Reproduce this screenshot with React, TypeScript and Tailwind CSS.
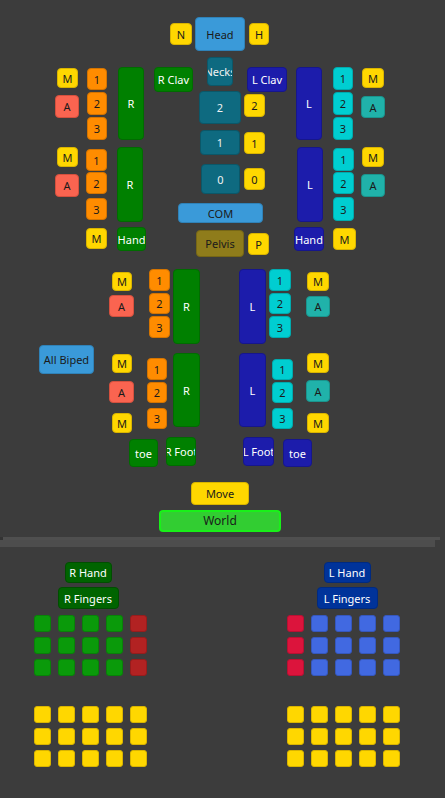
import React from 'react'

// colour sets for the picker buttons
const tone = {
  gold: 'bg-[#ffd700] border-[#d9b400] text-[#1a1a1a]',
  orange: 'bg-[#ff8c00] border-[#d47400] text-[#1a1a1a]',
  tomato: 'bg-[#fa6450] border-[#d4503e] text-[#1a1a1a]',
  green: 'bg-[#008000] border-[#006c00] text-white',
  blue: 'bg-[#1c1cab] border-[#16168c] text-white',
  cyan: 'bg-[#00ced1] border-[#00abae] text-[#1a1a1a]',
  teal: 'bg-[#20b2aa] border-[#1a948d] text-[#1a1a1a]',
  sky: 'bg-[#3a9ad9] border-[#2f82b8] text-[#1a1a1a]',
  spine: 'bg-[#0e6a80] border-[#0b5768] text-[#f2f2f2]',
  olive: 'bg-[#8f7c1b] border-[#766616] text-[#1a1a1a]',
}

type Tone = keyof typeof tone

type Node = { label: string; pos: string; tone: Tone }

// body picker nodes, placed on the canvas
const nodes: Node[] = [
  // head
  { label: 'N', pos: 'left-[170px] top-[23px] w-[22px] h-[22px]', tone: 'gold' },
  { label: 'Head', pos: 'left-[195px] top-[17px] w-[50px] h-[34px]', tone: 'sky' },
  { label: 'H', pos: 'left-[249px] top-[23px] w-[20px] h-[22px]', tone: 'gold' },

  // right upper arm
  { label: 'M', pos: 'left-[57px] top-[68px] w-[21px] h-[20px]', tone: 'gold' },
  { label: 'A', pos: 'left-[55px] top-[95px] w-[24px] h-[23px]', tone: 'tomato' },
  { label: '1', pos: 'left-[87px] top-[68px] w-[20px] h-[22px]', tone: 'orange' },
  { label: '2', pos: 'left-[87px] top-[92px] w-[20px] h-[23px]', tone: 'orange' },
  { label: '3', pos: 'left-[87px] top-[117px] w-[20px] h-[23px]', tone: 'orange' },
  { label: 'R', pos: 'left-[118px] top-[67px] w-[26px] h-[73px]', tone: 'green' },
  { label: 'R Clav', pos: 'left-[154px] top-[67px] w-[39px] h-[25px]', tone: 'green' },

  // neck / spine
  { label: 'Necks', pos: 'left-[207px] top-[57px] w-[26px] h-[29px]', tone: 'spine' },
  { label: '2', pos: 'left-[199px] top-[91px] w-[42px] h-[33px]', tone: 'spine' },
  { label: '2', pos: 'left-[244px] top-[94px] w-[21px] h-[23px]', tone: 'gold' },
  { label: '1', pos: 'left-[200px] top-[130px] w-[40px] h-[25px]', tone: 'spine' },
  { label: '1', pos: 'left-[244px] top-[132px] w-[21px] h-[22px]', tone: 'gold' },
  { label: '0', pos: 'left-[201px] top-[164px] w-[39px] h-[30px]', tone: 'spine' },
  { label: '0', pos: 'left-[244px] top-[168px] w-[21px] h-[22px]', tone: 'gold' },
  { label: 'COM', pos: 'left-[178px] top-[203px] w-[85px] h-[20px]', tone: 'sky' },
  { label: 'Pelvis', pos: 'left-[196px] top-[230px] w-[48px] h-[27px]', tone: 'olive' },
  { label: 'P', pos: 'left-[248px] top-[233px] w-[21px] h-[22px]', tone: 'gold' },

  // left upper arm
  { label: 'L Clav', pos: 'left-[247px] top-[67px] w-[40px] h-[25px]', tone: 'blue' },
  { label: 'L', pos: 'left-[296px] top-[67px] w-[26px] h-[73px]', tone: 'blue' },
  { label: '1', pos: 'left-[333px] top-[67px] w-[20px] h-[23px]', tone: 'cyan' },
  { label: '2', pos: 'left-[333px] top-[92px] w-[20px] h-[23px]', tone: 'cyan' },
  { label: '3', pos: 'left-[333px] top-[117px] w-[20px] h-[23px]', tone: 'cyan' },
  { label: 'M', pos: 'left-[362px] top-[68px] w-[22px] h-[20px]', tone: 'gold' },
  { label: 'A', pos: 'left-[361px] top-[96px] w-[24px] h-[22px]', tone: 'teal' },

  // right forearm + hand
  { label: 'M', pos: 'left-[57px] top-[147px] w-[21px] h-[20px]', tone: 'gold' },
  { label: 'A', pos: 'left-[55px] top-[174px] w-[24px] h-[23px]', tone: 'tomato' },
  { label: '1', pos: 'left-[86px] top-[149px] w-[21px] h-[22px]', tone: 'orange' },
  { label: '2', pos: 'left-[86px] top-[172px] w-[21px] h-[22px]', tone: 'orange' },
  { label: '3', pos: 'left-[86px] top-[198px] w-[21px] h-[22px]', tone: 'orange' },
  { label: 'R', pos: 'left-[117px] top-[147px] w-[26px] h-[75px]', tone: 'green' },
  { label: 'M', pos: 'left-[86px] top-[228px] w-[21px] h-[21px]', tone: 'gold' },
  { label: 'Hand', pos: 'left-[117px] top-[227px] w-[29px] h-[24px]', tone: 'green' },

  // left forearm + hand
  { label: 'L', pos: 'left-[297px] top-[147px] w-[26px] h-[75px]', tone: 'blue' },
  { label: '1', pos: 'left-[333px] top-[148px] w-[21px] h-[23px]', tone: 'cyan' },
  { label: '2', pos: 'left-[333px] top-[172px] w-[21px] h-[22px]', tone: 'cyan' },
  { label: '3', pos: 'left-[333px] top-[197px] w-[21px] h-[24px]', tone: 'cyan' },
  { label: 'M', pos: 'left-[362px] top-[147px] w-[22px] h-[20px]', tone: 'gold' },
  { label: 'A', pos: 'left-[361px] top-[174px] w-[24px] h-[23px]', tone: 'teal' },
  { label: 'Hand', pos: 'left-[294px] top-[227px] w-[30px] h-[24px]', tone: 'blue' },
  { label: 'M', pos: 'left-[333px] top-[228px] w-[23px] h-[22px]', tone: 'gold' },

  // thighs
  { label: 'M', pos: 'left-[112px] top-[272px] w-[20px] h-[19px]', tone: 'gold' },
  { label: 'A', pos: 'left-[109px] top-[295px] w-[25px] h-[22px]', tone: 'tomato' },
  { label: '1', pos: 'left-[149px] top-[269px] w-[21px] h-[22px]', tone: 'orange' },
  { label: '2', pos: 'left-[149px] top-[293px] w-[21px] h-[21px]', tone: 'orange' },
  { label: '3', pos: 'left-[149px] top-[316px] w-[21px] h-[22px]', tone: 'orange' },
  { label: 'R', pos: 'left-[173px] top-[269px] w-[27px] h-[75px]', tone: 'green' },
  { label: 'L', pos: 'left-[239px] top-[269px] w-[27px] h-[75px]', tone: 'blue' },
  { label: '1', pos: 'left-[269px] top-[269px] w-[22px] h-[22px]', tone: 'cyan' },
  { label: '2', pos: 'left-[269px] top-[293px] w-[22px] h-[21px]', tone: 'cyan' },
  { label: '3', pos: 'left-[269px] top-[316px] w-[22px] h-[22px]', tone: 'cyan' },
  { label: 'M', pos: 'left-[307px] top-[272px] w-[22px] h-[19px]', tone: 'gold' },
  { label: 'A', pos: 'left-[306px] top-[296px] w-[24px] h-[21px]', tone: 'teal' },

  { label: 'All Biped', pos: 'left-[39px] top-[345px] w-[55px] h-[29px]', tone: 'sky' },

  // calves
  { label: 'M', pos: 'left-[112px] top-[354px] w-[20px] h-[19px]', tone: 'gold' },
  { label: 'A', pos: 'left-[109px] top-[381px] w-[25px] h-[22px]', tone: 'tomato' },
  { label: 'M', pos: 'left-[112px] top-[413px] w-[20px] h-[20px]', tone: 'gold' },
  { label: '1', pos: 'left-[147px] top-[358px] w-[20px] h-[22px]', tone: 'orange' },
  { label: '2', pos: 'left-[147px] top-[382px] w-[20px] h-[21px]', tone: 'orange' },
  { label: '3', pos: 'left-[147px] top-[408px] w-[20px] h-[21px]', tone: 'orange' },
  { label: 'R', pos: 'left-[173px] top-[353px] w-[27px] h-[74px]', tone: 'green' },
  { label: 'L', pos: 'left-[239px] top-[353px] w-[27px] h-[74px]', tone: 'blue' },
  { label: '1', pos: 'left-[272px] top-[359px] w-[21px] h-[21px]', tone: 'cyan' },
  { label: '2', pos: 'left-[272px] top-[382px] w-[21px] h-[21px]', tone: 'cyan' },
  { label: '3', pos: 'left-[272px] top-[408px] w-[21px] h-[21px]', tone: 'cyan' },
  { label: 'M', pos: 'left-[307px] top-[353px] w-[22px] h-[20px]', tone: 'gold' },
  { label: 'A', pos: 'left-[306px] top-[380px] w-[24px] h-[22px]', tone: 'teal' },
  { label: 'M', pos: 'left-[307px] top-[413px] w-[22px] h-[20px]', tone: 'gold' },

  // feet
  { label: 'toe', pos: 'left-[129px] top-[439px] w-[29px] h-[28px]', tone: 'green' },
  { label: 'R Foot', pos: 'left-[166px] top-[437px] w-[30px] h-[29px]', tone: 'green' },
  { label: 'L Foot', pos: 'left-[243px] top-[437px] w-[31px] h-[29px]', tone: 'blue' },
  { label: 'toe', pos: 'left-[283px] top-[439px] w-[29px] h-[28px]', tone: 'blue' },

  { label: 'Move', pos: 'left-[191px] top-[482px] w-[58px] h-[23px]', tone: 'gold' },
]

function PickButton({ label, pos, tone: t }: Node) {
  return (
    <button
      className={`absolute ${pos} ${tone[t]} flex items-center justify-center overflow-hidden whitespace-nowrap rounded-[4px] border text-[11px] leading-none`}
    >
      {label}
    </button>
  )
}

function FingerGrid({ cells }: { cells: string[] }) {
  return (
    <div className="grid grid-cols-5 gap-x-[7px] gap-y-[5px]">
      {cells.map((c, i) => (
        <div key={i} className={`h-[17px] w-[17px] rounded-[3px] border ${c}`} />
      ))}
    </div>
  )
}

const G = 'bg-[#0a9a0a] border-[#088208]'
const RR = 'bg-[#b22222] border-[#961c1c]'
const CR = 'bg-[#dc143c] border-[#b81032]'
const B = 'bg-[#4169e1] border-[#3557bd]'
const Y = 'bg-[#ffd700] border-[#d9b400]'

const rightFingers = [G, G, G, G, RR, G, G, G, G, RR, G, G, G, G, RR]
const leftFingers = [CR, B, B, B, B, CR, B, B, B, B, CR, B, B, B, B]
const extras = Array(15).fill(Y)

export default function App() {
  return (
    <div
      className="min-h-[798px] w-[445px] bg-[#3c3c3c] text-[11px]"
      style={{ fontFamily: '"Noto Sans", "Open Sans", sans-serif' }}
    >
      {/* body canvas */}
      <div className="relative h-[537px]">
        {nodes.map((n, i) => (
          <PickButton key={i} {...n} />
        ))}
        <button className="absolute left-[159px] top-[510px] flex h-[22px] w-[122px] items-center justify-center rounded-[4px] border-2 border-[#19f019] bg-[#32cd32] text-[12px] leading-none text-[#1a1a1a]">
          World
        </button>
      </div>

      {/* splitter */}
      <div className="relative h-[10px]">
        <div className="h-[3px] w-[440px] bg-[#4f4f4f]" />
        <div className="h-[7px] w-[435px] bg-[#4d4d4d]" />
        <div className="absolute left-0 top-0 h-[3px] w-[3px] bg-[#333]" />
      </div>

      {/* hands */}
      <div className="flex pt-[15px]">
        <div className="ml-[34px] flex w-[113px] flex-col items-center">
          <div className="ml-[-5px] flex h-[21px] w-[47px] items-center justify-center rounded-[4px] border border-[#004e00] bg-[#006400] leading-none text-white">
            R Hand
          </div>
          <div className="ml-[-5px] mt-[4px] flex h-[22px] w-[61px] items-center justify-center rounded-[4px] border border-[#004e00] bg-[#006400] leading-none text-white">
            R Fingers
          </div>
          <div className="mt-[6px]">
            <FingerGrid cells={rightFingers} />
          </div>
          <div className="mt-[30px]">
            <FingerGrid cells={extras} />
          </div>
        </div>

        <div className="ml-[140px] flex w-[113px] flex-col items-center">
          <div className="ml-[7px] flex h-[21px] w-[47px] items-center justify-center rounded-[4px] border border-[#002a80] bg-[#00339a] leading-none text-white">
            L Hand
          </div>
          <div className="ml-[7px] mt-[4px] flex h-[22px] w-[61px] items-center justify-center rounded-[4px] border border-[#002a80] bg-[#00339a] leading-none text-white">
            L Fingers
          </div>
          <div className="mt-[6px]">
            <FingerGrid cells={leftFingers} />
          </div>
          <div className="mt-[30px]">
            <FingerGrid cells={extras} />
          </div>
        </div>
      </div>
    </div>
  )
}
